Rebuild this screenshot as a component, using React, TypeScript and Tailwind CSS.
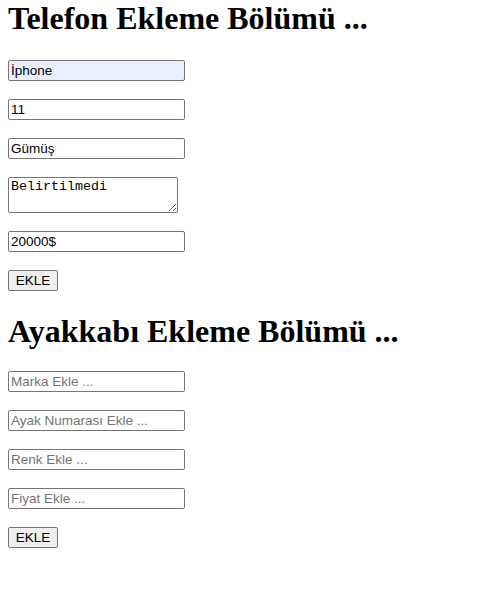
import React, { useState } from "react";

const inputCls =
  "block w-[177px] h-[21px] border border-[#767676] rounded-[2px] px-[2px] py-[1px] text-[13.5px] leading-[17px] text-black placeholder:text-[#757575] font-['Liberation_Sans',Arial,sans-serif] outline-none";
const buttonCls =
  "block h-[21px] w-[50px] border border-[#767676] rounded-[2px] bg-[#efefef] text-[13.5px] leading-[17px] text-black text-center font-['Liberation_Sans',Arial,sans-serif]";
const headCls =
  "text-[32px] font-bold leading-[37px] text-black font-['Liberation_Serif','Times_New_Roman',serif]";

export default function App() {
  const [phone, setPhone] = useState({
    marka: "İphone",
    model: "11",
    renk: "Gümüş",
    aciklama: "Belirtilmedi",
    fiyat: "20000$",
  });
  const [shoe, setShoe] = useState({ marka: "", numara: "", renk: "", fiyat: "" });

  return (
    <div className="w-[486px] h-[593px] bg-white pl-2">
      {/* Telefon */}
      <h1 className={headCls}>Telefon Ekleme Bölümü ...</h1>
      <div className="mt-[23px] flex flex-col items-start gap-[18px]">
        <input
          className={inputCls + " bg-[#e8f0fe]"}
          value={phone.marka}
          onChange={(e) => setPhone({ ...phone, marka: e.target.value })}
        />
        <input
          className={inputCls}
          value={phone.model}
          onChange={(e) => setPhone({ ...phone, model: e.target.value })}
        />
        <input
          className={inputCls}
          value={phone.renk}
          onChange={(e) => setPhone({ ...phone, renk: e.target.value })}
        />
        <textarea
          className="block w-[170px] h-[36px] border border-[#767676] rounded-[2px] px-[2px] py-[1px] text-[13.33px] leading-[15px] text-black font-['Liberation_Mono','Courier_New',monospace] outline-none"
          value={phone.aciklama}
          onChange={(e) => setPhone({ ...phone, aciklama: e.target.value })}
        />
        <input
          className={inputCls}
          value={phone.fiyat}
          onChange={(e) => setPhone({ ...phone, fiyat: e.target.value })}
        />
        <button className={buttonCls}>EKLE</button>
      </div>

      {/* Ayakkabı */}
      <h1 className={headCls + " mt-[22px]"}>Ayakkabı Ekleme Bölümü ...</h1>
      <div className="mt-[21px] flex flex-col items-start gap-[18px]">
        <input
          className={inputCls}
          placeholder="Marka Ekle ..."
          value={shoe.marka}
          onChange={(e) => setShoe({ ...shoe, marka: e.target.value })}
        />
        <input
          className={inputCls}
          placeholder="Ayak Numarası Ekle ..."
          value={shoe.numara}
          onChange={(e) => setShoe({ ...shoe, numara: e.target.value })}
        />
        <input
          className={inputCls}
          placeholder="Renk Ekle ..."
          value={shoe.renk}
          onChange={(e) => setShoe({ ...shoe, renk: e.target.value })}
        />
        <input
          className={inputCls}
          placeholder="Fiyat Ekle ..."
          value={shoe.fiyat}
          onChange={(e) => setShoe({ ...shoe, fiyat: e.target.value })}
        />
        <button className={buttonCls}>EKLE</button>
      </div>
    </div>
  );
}
